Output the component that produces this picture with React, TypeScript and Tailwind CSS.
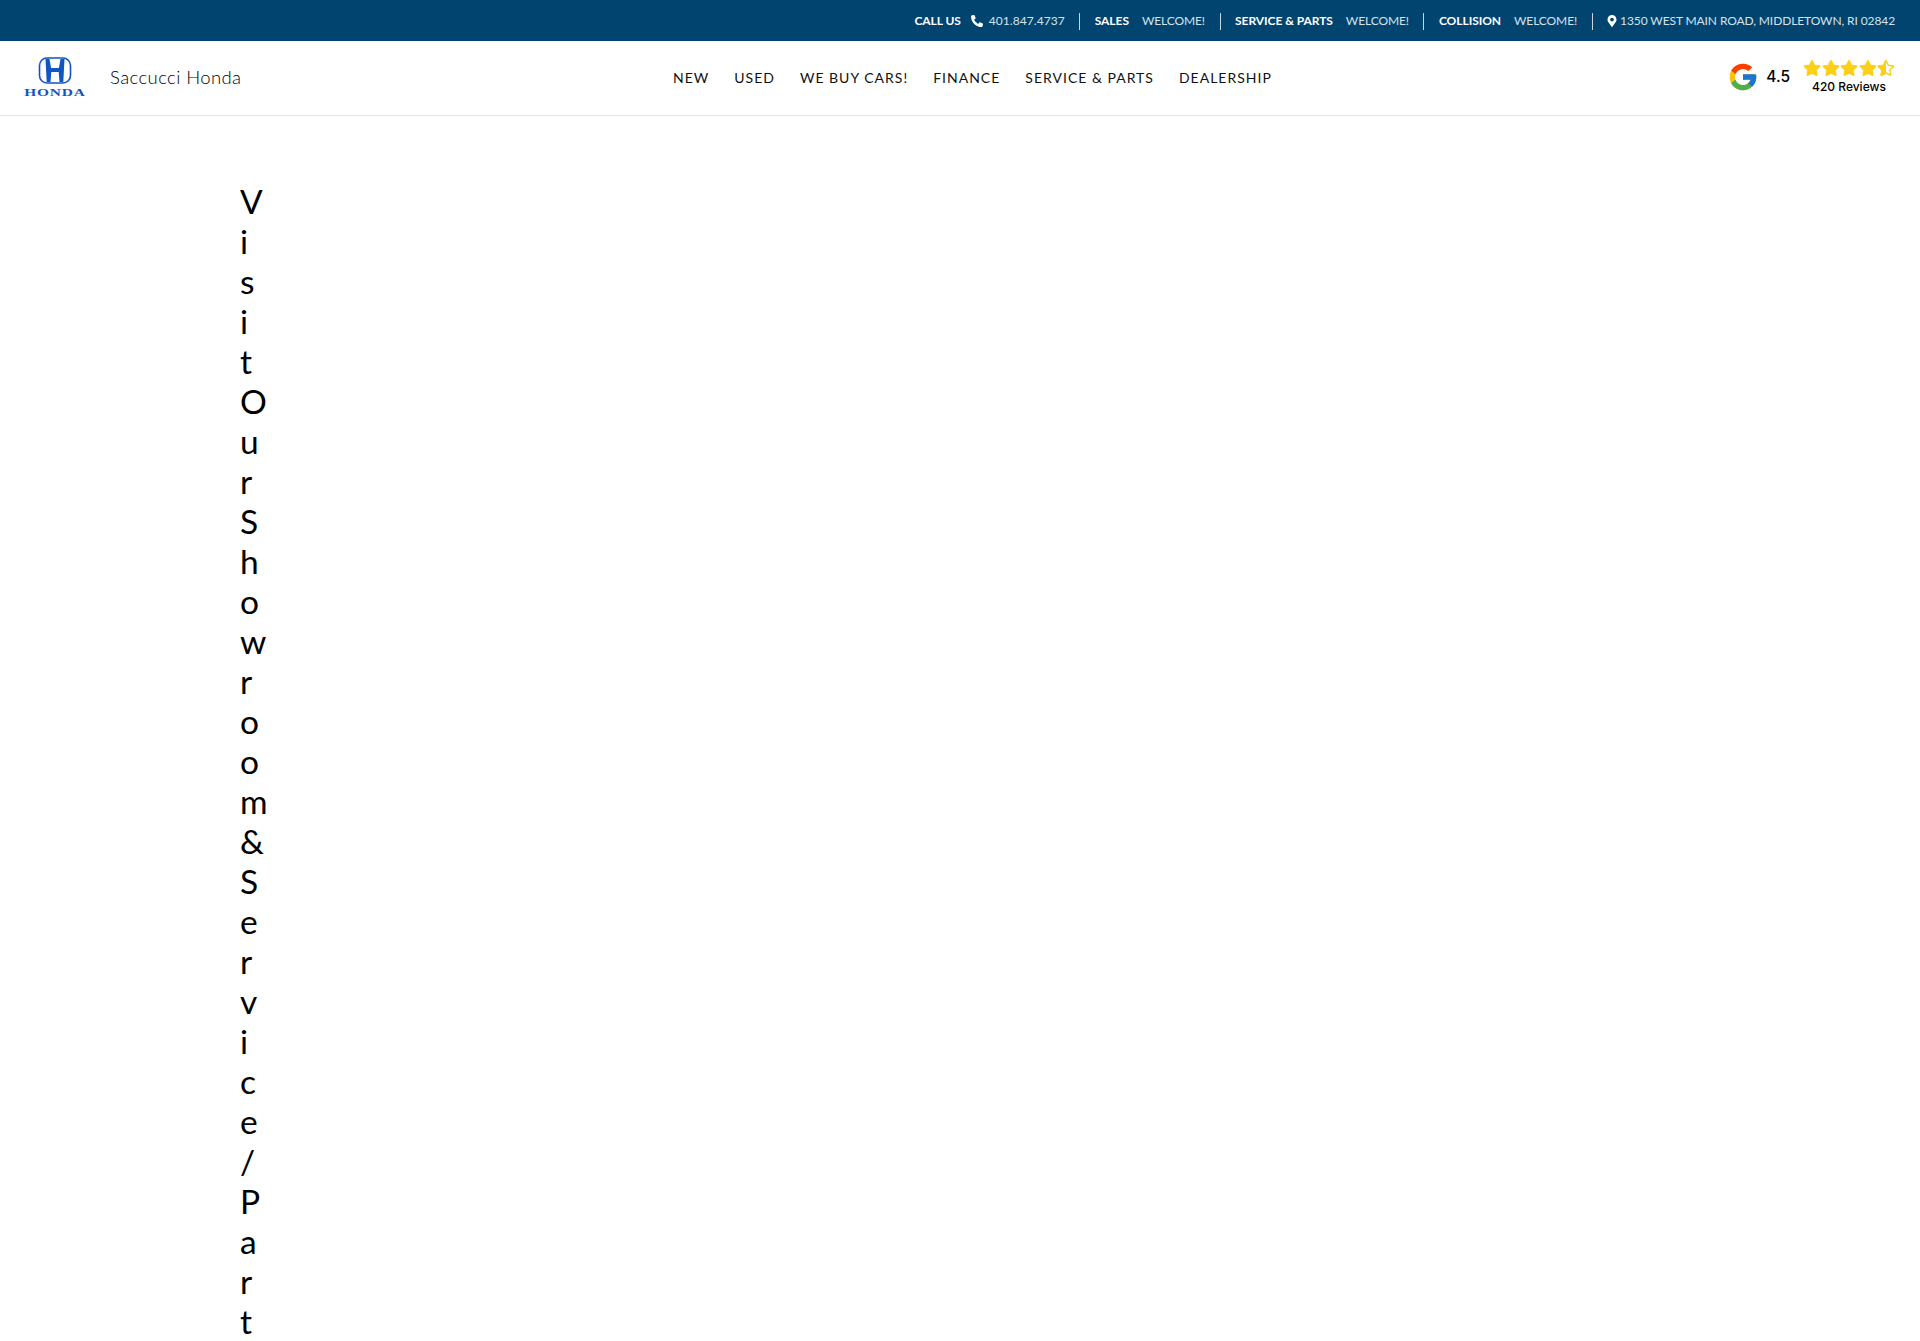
import { FaMapMarkerAlt, FaPhoneAlt, FaRegStar, FaStar, FaStarHalf } from "react-icons/fa";
import { FcGoogle } from "react-icons/fc";

const navLinks = ["NEW", "USED", "WE BUY CARS!", "FINANCE", "SERVICE & PARTS", "DEALERSHIP"];

const departments = [
  { label: "SALES", value: "WELCOME!" },
  { label: "SERVICE & PARTS", value: "WELCOME!" },
  { label: "COLLISION", value: "WELCOME!" },
];

function Divider() {
  return <span className="mx-[14.5px] h-[17px] w-px bg-[#c4d6e2]" />;
}

function TopBar() {
  return (
    <div className="flex h-[41px] items-center justify-end bg-[#00446f] pt-px pr-[25px] text-[12px] tracking-[-0.1px] text-[#d5e2ea]">
      <span className="font-bold tracking-[-0.05px] text-white">CALL US</span>
      <FaPhoneAlt className="ml-[10px] mr-[6px] h-[12px] w-[12px] text-white" />
      <span className="tracking-[0.05px]">401.847.4737</span>
      {departments.map((dept) => (
        <div key={dept.label} className="flex items-center">
          <Divider />
          <span className="font-bold tracking-[-0.05px] text-white">{dept.label}</span>
          <span className="ml-[13px]">{dept.value}</span>
        </div>
      ))}
      <Divider />
      <FaMapMarkerAlt className="mr-[3px] h-[12px] w-[10px] text-white" />
      <span>1350 WEST MAIN ROAD, MIDDLETOWN, RI 02842</span>
    </div>
  );
}

function HondaLogo() {
  return (
    <div className="flex w-[62px] flex-col items-center">
      <svg viewBox="0 0 33 27" className="h-[27px] w-[34px]" fill="none">
        <rect x="1" y="1" width="31" height="25" rx="7.5" stroke="#0f56c4" strokeWidth="1.6" />
        <path d="M7 2H11L12.6 11H20.4L22 2H26L24.8 25H21L20.2 15H12.8L12 25H8.2Z" fill="#0f56c4" />
      </svg>
      <span className="mt-[4px] scale-x-[1.4] font-['Liberation_Serif'] text-[11px] leading-[9px] font-bold tracking-[0.6px] text-[#0f56c4]">
        HONDA
      </span>
    </div>
  );
}

function Rating() {
  return (
    <div className="ml-auto flex items-center">
      <FcGoogle className="h-[32px] w-[32px]" />
      <span className="ml-[7px] font-['Inter'] text-[15.5px] font-medium text-black">4.5</span>
      <div className="ml-[13px] flex w-[92px] flex-col items-center">
        <div className="flex gap-[0.5px] text-[#fdd017]">
          <FaStar className="h-[18px] w-[18px]" />
          <FaStar className="h-[18px] w-[18px]" />
          <FaStar className="h-[18px] w-[18px]" />
          <FaStar className="h-[18px] w-[18px]" />
          <span className="relative h-[18px] w-[18px]">
            <FaRegStar className="h-[18px] w-[18px]" />
            <FaStarHalf className="absolute top-0 left-0 h-[18px] w-[18px]" />
          </span>
        </div>
        <span className="mt-px font-['Inter'] text-[12px] leading-[18px] font-medium text-black">420 Reviews</span>
      </div>
    </div>
  );
}

function Header() {
  return (
    <header className="flex h-[75px] items-center border-b border-[#e6e6e6] bg-white pr-[25px] pb-[2px] pl-[24px]">
      <div className="flex w-[649px] items-center">
        <HondaLogo />
        <span className="mt-[2px] ml-[24px] text-[18.5px] font-light tracking-[0.4px] text-black">Saccucci Honda</span>
      </div>
      <nav className="flex gap-[25px] text-[14px] tracking-[1px] text-[#111]">
        {navLinks.map((link) => (
          <a key={link} href="#">
            {link}
          </a>
        ))}
      </nav>
      <Rating />
    </header>
  );
}

export default function App() {
  return (
    <div className="h-screen overflow-hidden bg-white font-['Lato',sans-serif]">
      <TopBar />
      <Header />
      <main className="pt-[65px] pl-[240px]">
        {/* heading is squeezed into a zero width column, one letter per line */}
        <h1 className="w-0 text-[33.5px] leading-[40px] font-normal break-all text-black">
          Visit Our Showroom &amp; Service / Parts
        </h1>
      </main>
    </div>
  );
}
